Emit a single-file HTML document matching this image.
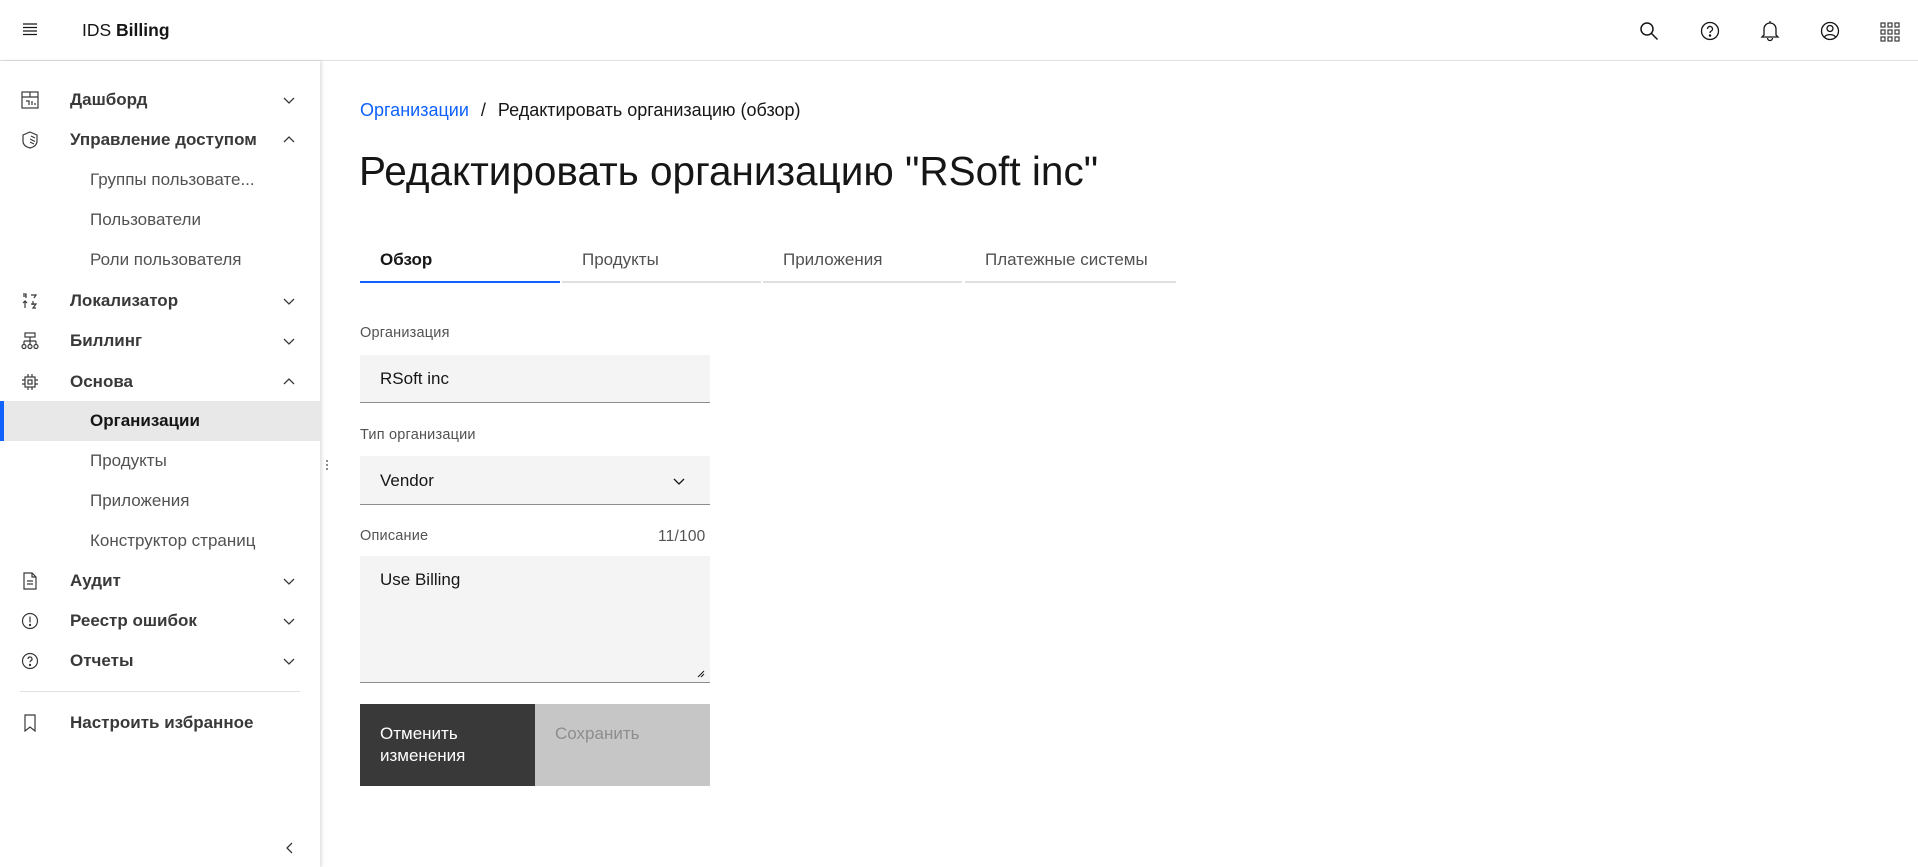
<!DOCTYPE html>
<html><head><meta charset="utf-8"><style>
*{box-sizing:border-box;margin:0;padding:0}
body{width:1918px;height:867px;overflow:hidden;background:#fff;font-family:"Liberation Sans","Noto Sans CJK SC",sans-serif;color:#161616;position:relative}
.hdr{position:absolute;left:0;top:0;width:1918px;height:61px;border-bottom:1px solid #e0e0e0;background:#fff}
.abs{position:absolute}
.side{position:absolute;left:0;top:61px;width:320px;height:806px;background:#fff;box-shadow:2px 0 3px rgba(0,0,0,.12)}
.mi{position:absolute;left:0;width:320px;height:40px;display:flex;align-items:center;font-size:17px}
.mi .t{position:absolute;left:70px;font-weight:bold;color:#393939}
.mi .s{position:absolute;left:90px;color:#525252}
.mi svg.ic{position:absolute;left:21px;top:11px}
.mi svg.ch{position:absolute;left:282px;top:13px}
.lbl{position:absolute;font-size:14.5px;color:#525252;letter-spacing:.2px}
.fld{position:absolute;left:360px;width:350px;background:#f4f4f4;border-bottom:1px solid #8d8d8d;font-size:17px;padding-left:20px}
.tab{position:absolute;top:240px;height:43px;font-size:17px;color:#525252;border-bottom:2px solid #e0e0e0;padding-left:20px;padding-top:10px}
</style></head><body>
<div class="hdr">
<svg class="abs" style="left:22px;top:22px" width="16" height="14" viewBox="0 0 16 14" stroke="#161616" stroke-width="1.2"><path d="M1 2h14M1 5.5h14M1 9h14M1 12.5h14"/></svg>
<div class="abs" style="left:82px;top:20px;font-size:17.5px"><span>IDS </span><b>Billing</b></div>
<svg class="abs" style="left:1639px;top:21px" width="20" height="20" viewBox="0 0 20 20" fill="none" stroke="#161616" stroke-width="1.5"><circle cx="8" cy="8" r="6"/><path d="M12.5 12.5l6 6"/></svg>
<svg class="abs" style="left:1700px;top:21px" width="20" height="20" viewBox="0 0 20 20" fill="none" stroke="#161616" stroke-width="1.3"><circle cx="10" cy="10" r="8.5"/><path d="M7.5 8a2.5 2.5 0 1 1 3.5 2.2c-.8.4-1 .9-1 1.8"/><circle cx="10" cy="14.5" r=".6" fill="#161616"/></svg>
<svg class="abs" style="left:1760px;top:20px" width="20" height="22" viewBox="0 0 20 22" fill="none" stroke="#161616" stroke-width="1.3"><path d="M4 15V9a6 6 0 0 1 12 0v6l2 2H2z"/><path d="M10 1v2M7.5 18a2.5 2.5 0 0 0 5 0"/></svg>
<svg class="abs" style="left:1820px;top:21px" width="20" height="20" viewBox="0 0 20 20" fill="none" stroke="#161616" stroke-width="1.3"><circle cx="10" cy="10" r="8.5"/><circle cx="10" cy="7.5" r="3"/><path d="M4.5 16a6 4 0 0 1 11 0"/></svg>
<svg class="abs" style="left:1880px;top:22px" width="20" height="20" viewBox="0 0 20 20" fill="none" stroke="#393939" stroke-width="1.2"><g><rect x="1" y="1" width="4" height="4"/><rect x="8" y="1" width="4" height="4"/><rect x="15" y="1" width="4" height="4"/><rect x="1" y="8" width="4" height="4"/><rect x="8" y="8" width="4" height="4"/><rect x="15" y="8" width="4" height="4"/><rect x="1" y="15" width="4" height="4"/><rect x="8" y="15" width="4" height="4"/><rect x="15" y="15" width="4" height="4"/></g></svg>
</div>
<div class="side">
<div class="mi" style="top:19px"><svg class="ic" width="18" height="18" viewBox="0 0 18 18" fill="none" stroke="#393939" stroke-width="1.2"><rect x="1" y="1" width="16" height="16"/><path d="M1 6h16M9 1v5M5 10h3v4M11 10v4M14 12v2"/></svg><span class="t">Дашборд</span><svg class="ch" width="14" height="14" viewBox="0 0 14 14" fill="none" stroke="#393939" stroke-width="1.3"><path d="M2 5l5 5 5-5"/></svg></div>
<div class="mi" style="top:59px"><svg class="ic" width="18" height="18" viewBox="0 0 18 18" fill="none" stroke="#393939" stroke-width="1.2"><path d="M9 1l7 3v6c0 4-3 6-7 7-4-1-7-3-7-7V4z"/><path d="M10 5l4 2M9 8l5 2.5M9 11l4 2"/></svg><span class="t">Управление доступом</span><svg class="ch" width="14" height="14" viewBox="0 0 14 14" fill="none" stroke="#393939" stroke-width="1.3"><path d="M2 9l5-5 5 5"/></svg></div>
<div class="mi" style="top:99px"><span class="s">Группы пользовате...</span></div>
<div class="mi" style="top:139px"><span class="s">Пользователи</span></div>
<div class="mi" style="top:179px"><span class="s">Роли пользователя</span></div>
<div class="mi" style="top:220px"><svg class="ic" width="18" height="18" viewBox="0 0 18 18" fill="none" stroke="#393939" stroke-width="1.2"><path d="M2 2h3v4M2 4h3M10 3h5l-2 3M4 9v7M2 11l2-2 2 2M12 9v4M10 12h5l-3 4h3"/></svg><span class="t">Локализатор</span><svg class="ch" width="14" height="14" viewBox="0 0 14 14" fill="none" stroke="#393939" stroke-width="1.3"><path d="M2 5l5 5 5-5"/></svg></div>
<div class="mi" style="top:260px"><svg class="ic" width="18" height="18" viewBox="0 0 18 18" fill="none" stroke="#393939" stroke-width="1.2"><rect x="4" y="1" width="10" height="4"/><path d="M9 5v4M3 9h12M3 9v3M9 9v3M15 9v3"/><circle cx="3" cy="14.5" r="2"/><circle cx="9" cy="14.5" r="2"/><circle cx="15" cy="14.5" r="2"/></svg><span class="t">Биллинг</span><svg class="ch" width="14" height="14" viewBox="0 0 14 14" fill="none" stroke="#393939" stroke-width="1.3"><path d="M2 5l5 5 5-5"/></svg></div>
<div class="mi" style="top:301px"><svg class="ic" width="18" height="18" viewBox="0 0 18 18" fill="none" stroke="#393939" stroke-width="1.2"><rect x="4" y="4" width="10" height="10"/><rect x="7" y="7" width="4" height="4"/><path d="M7 1v3M11 1v3M7 14v3M11 14v3M1 7h3M1 11h3M14 7h3M14 11h3"/></svg><span class="t">Основа</span><svg class="ch" width="14" height="14" viewBox="0 0 14 14" fill="none" stroke="#393939" stroke-width="1.3"><path d="M2 9l5-5 5 5"/></svg></div>
<div class="mi" style="top:340px;background:#e8e8e8;border-left:4px solid #0f62fe"><span class="s" style="left:86px;font-weight:bold;color:#161616">Организации</span></div>
<div class="mi" style="top:380px"><span class="s">Продукты</span></div>
<div class="mi" style="top:420px"><span class="s">Приложения</span></div>
<div class="mi" style="top:460px"><span class="s">Конструктор страниц</span></div>
<div class="mi" style="top:500px"><svg class="ic" width="18" height="18" viewBox="0 0 18 18" fill="none" stroke="#393939" stroke-width="1.2"><path d="M3 1h8l4 4v12H3z M11 1v4h4M6 9h6M6 12h6"/></svg><span class="t">Аудит</span><svg class="ch" width="14" height="14" viewBox="0 0 14 14" fill="none" stroke="#393939" stroke-width="1.3"><path d="M2 5l5 5 5-5"/></svg></div>
<div class="mi" style="top:540px"><svg class="ic" width="18" height="18" viewBox="0 0 18 18" fill="none" stroke="#393939" stroke-width="1.2"><circle cx="9" cy="9" r="7.5"/><path d="M9 4.5v6"/><circle cx="9" cy="13" r=".6" fill="#393939"/></svg><span class="t">Реестр ошибок</span><svg class="ch" width="14" height="14" viewBox="0 0 14 14" fill="none" stroke="#393939" stroke-width="1.3"><path d="M2 5l5 5 5-5"/></svg></div>
<div class="mi" style="top:580px"><svg class="ic" width="18" height="18" viewBox="0 0 18 18" fill="none" stroke="#393939" stroke-width="1.2"><circle cx="9" cy="9" r="7.5"/><path d="M7 7a2 2 0 1 1 2.8 1.8c-.6.3-.8.7-.8 1.5"/><circle cx="9" cy="13" r=".6" fill="#393939"/></svg><span class="t">Отчеты</span><svg class="ch" width="14" height="14" viewBox="0 0 14 14" fill="none" stroke="#393939" stroke-width="1.3"><path d="M2 5l5 5 5-5"/></svg></div>
<div class="abs" style="left:20px;top:630px;width:280px;height:1px;background:#e0e0e0"></div>
<div class="mi" style="top:642px"><svg class="ic" width="18" height="18" viewBox="0 0 18 18" fill="none" stroke="#393939" stroke-width="1.2"><path d="M4 1h10v16l-5-4-5 4z"/></svg><span class="t">Настроить избранное</span></div>
<svg class="abs" style="left:283px;top:780px" width="14" height="14" viewBox="0 0 14 14" fill="none" stroke="#393939" stroke-width="1.3"><path d="M9 2l-5 5 5 5"/></svg>
</div>
<div class="abs" style="left:326px;top:460px;width:2px;height:10px;border-left:2px dotted #8d8d8d"></div>
<div class="abs" style="left:360px;top:100px;font-size:18px"><span style="color:#0f62fe">Организации</span><span style="margin:0 12px">/</span><span>Редактировать организацию (обзор)</span></div>
<div class="abs" style="left:359px;top:148px;font-size:40.5px;font-weight:300;color:#161616">Редактировать организацию "RSoft inc"</div>
<div class="tab" style="left:360px;width:200px;color:#161616;font-weight:bold;border-bottom-color:#0f62fe">Обзор</div>
<div class="tab" style="left:562px;width:199px">Продукты</div>
<div class="tab" style="left:763px;width:199px">Приложения</div>
<div class="tab" style="left:965px;width:211px">Платежные системы</div>
<div class="lbl" style="left:360px;top:325px">Организация</div>
<div class="fld" style="top:355px;height:48px;line-height:48px">RSoft inc</div>
<div class="lbl" style="left:360px;top:427px">Тип организации</div>
<div class="fld" style="top:456px;height:49px;line-height:49px">Vendor<svg class="abs" style="left:312px;top:18px" width="14" height="14" viewBox="0 0 14 14" fill="none" stroke="#161616" stroke-width="1.3"><path d="M2 5l5 5 5-5"/></svg></div>
<div class="lbl" style="left:360px;top:528px">Описание</div>
<div class="lbl" style="left:658px;top:528px;font-size:15.5px">11/100</div>
<div class="fld" style="top:556px;height:127px;padding-top:14px">Use Billing<svg class="abs" style="left:337px;top:114px" width="8" height="8" viewBox="0 0 8 8" stroke="#161616" stroke-width="1"><path d="M1 7l6-6M4 7l3-3"/></svg></div>
<div class="abs" style="left:360px;top:704px;width:175px;height:82px;background:#393939;color:#fff;font-size:17px;padding:19px 0 0 20px;line-height:22px">Отменить<br>изменения</div>
<div class="abs" style="left:535px;top:704px;width:175px;height:82px;background:#c6c6c6;color:#8d8d8d;font-size:17px;padding:19px 0 0 20px;line-height:22px">Сохранить</div>
</body></html>
